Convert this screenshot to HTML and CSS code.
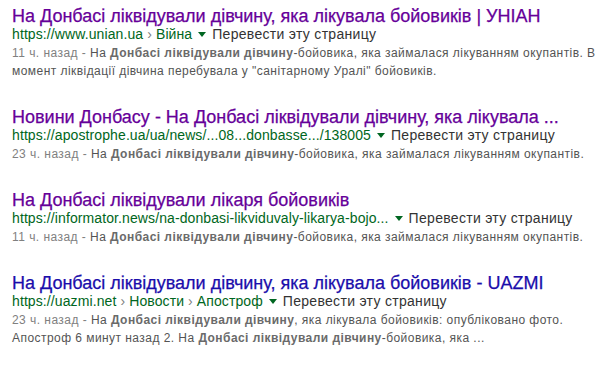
FILE: index.html
```html
<!DOCTYPE html>
<html lang="uk">
<head>
    <meta charset="UTF-8">
    <meta name="viewport" content="width=device-width, initial-scale=1.0">
    <title>Результати пошуку</title>
    <link rel="stylesheet" href="styles.css">
</head>
<body>
    <div class="results">
        <div class="result">
            <a class="title visited" href="#">На Донбасі ліквідували дівчину, яка лікувала бойовиків | УНІАН</a>
            <div class="url-line">
                <span class="url">https://www.unian.ua <span class="sep">›</span> Війна</span>
                <span class="arrow"></span>
                <span class="translate">Перевести эту страницу</span>
            </div>
            <div class="snippet">
                <span class="date">11 ч. назад - </span>На <b>Донбасі ліквідували дівчину</b>-бойовика, яка займалася лікуванням окупантів. В<br>
                момент ліквідації дівчина перебувала у "санітарному Уралі" бойовиків.
            </div>
        </div>

        <div class="result">
            <a class="title visited" href="#">Новини Донбасу - На Донбасі ліквідували дівчину, яка лікувала ...</a>
            <div class="url-line">
                <span class="url">https://apostrophe.ua/ua/news/...08...donbasse.../138005</span>
                <span class="arrow"></span>
                <span class="translate">Перевести эту страницу</span>
            </div>
            <div class="snippet">
                <span class="date">23 ч. назад - </span>На <b>Донбасі ліквідували дівчину</b>-бойовика, яка займалася лікуванням окупантів.
            </div>
        </div>

        <div class="result">
            <a class="title visited" href="#">На Донбасі ліквідували лікаря бойовиків</a>
            <div class="url-line">
                <span class="url">https://informator.news/na-donbasi-likviduvaly-likarya-bojo...</span>
                <span class="arrow"></span>
                <span class="translate">Перевести эту страницу</span>
            </div>
            <div class="snippet">
                <span class="date">11 ч. назад - </span>На <b>Донбасі ліквідували дівчину</b>-бойовика, яка займалася лікуванням окупантів.
            </div>
        </div>

        <div class="result">
            <a class="title" href="#">На Донбасі ліквідували дівчину, яка лікувала бойовиків - UAZMI</a>
            <div class="url-line">
                <span class="url">https://uazmi.net <span class="sep">›</span> Новости <span class="sep">›</span> Апостроф</span>
                <span class="arrow"></span>
                <span class="translate">Перевести эту страницу</span>
            </div>
            <div class="snippet">
                <span class="date">23 ч. назад - </span>На <b>Донбасі ліквідували дівчину</b>, яка лікувала бойовиків: опубліковано фото.<br>
                Апостроф 6 минут назад 2. На <b>Донбасі ліквідували дівчину</b>-бойовика, яка ...
            </div>
        </div>
    </div>
</body>
</html>
```

FILE: styles.css
```css
body {
    margin: 0;
    background: #fff;
    font-family: "Liberation Sans", Arial, sans-serif;
}
.results {
    padding: 6px 0 0 12px;
}
.result {
    margin-bottom: 27px;
}
.title {
    display: block;
    font-size: 18px;
    line-height: 20px;
    color: #1a0dab;
    text-decoration: none;
    white-space: nowrap;
    -webkit-text-stroke: 0.25px;
}
.title.visited {
    color: #660099;
}
.url-line {
    display: flex;
    align-items: center;
    font-size: 14px;
    line-height: 16px;
    white-space: nowrap;
}
.url {
    color: #006621;
    letter-spacing: 0.1px;
}
.sep {
    color: #808080;
}
.arrow {
    width: 0;
    height: 0;
    border-left: 4px solid transparent;
    border-right: 4px solid transparent;
    border-top: 5px solid #006621;
    margin: 1px 6px 0 6px;
}
.translate {
    letter-spacing: 0.3px;
    color: #333;
}
.snippet {
    margin-top: 2px;
    font-size: 12px;
    line-height: 18px;
    letter-spacing: 0.45px;
    color: #545454;
    white-space: nowrap;
}
.snippet b {
    color: #6a6a6a;
}
.date {
    color: #808080;
}
```
